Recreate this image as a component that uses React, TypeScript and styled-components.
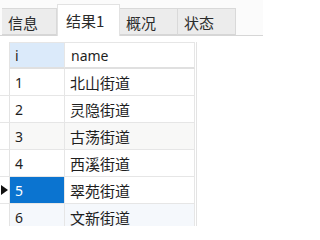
import React from 'react';
import styled, { createGlobalStyle } from 'styled-components';

const GlobalStyle = createGlobalStyle`
  html, body {
    margin: 0;
    padding: 0;
    background: #ffffff;
  }
  body {
    width: 263px;
    height: 226px;
    overflow: hidden;
    font-family: "Noto Sans", "Noto Sans CJK SC", sans-serif;
  }
`;

const Page = styled.div`
  display: flex;
  flex-direction: column;
  width: 263px;
  height: 226px;
  overflow: hidden;
  background: #fff;
`;

const TabBar = styled.div`
  flex-shrink: 0;
  display: flex;
  align-items: flex-end;
  height: 36px;
  box-sizing: border-box;
  padding-left: 2px;
  border-bottom: 1px solid #d6d6d6;
  background: #fbfbfb;
`;

const Tab = styled.div<{ $active?: boolean; $w: number }>`
  box-sizing: border-box;
  width: ${(p) => p.$w}px;
  height: ${(p) => (p.$active ? 32 : 27)}px;
  margin-bottom: ${(p) => (p.$active ? -1 : 0)}px;
  padding-left: ${(p) => (p.$active ? 8 : 6)}px;
  display: flex;
  align-items: center;
  background: ${(p) => (p.$active ? '#ffffff' : '#ececec')};
  border: 1px solid ${(p) => (p.$active ? '#e2e2e2' : '#d9d9d9')};
  border-bottom: ${(p) => (p.$active ? 'none' : '1px solid #d6d6d6')};
  border-left: ${(p) => (p.$active ? '1px solid #e2e2e2' : 'none')};
  font-family: "Noto Sans CJK SC", sans-serif;
  font-size: 15px;
  color: #2b2b2b;
  padding-top: ${(p) => (p.$active ? 0 : 1)}px;
`;

const Grid = styled.div`
  flex-shrink: 0;
  display: grid;
  grid-template-columns: 10px 55px 130px;
  grid-auto-rows: 27px;
  margin-top: 6px;
  width: 196px;
  border-right: 1px solid #e3e3e3;
`;

const Cell = styled.div<{ $bg?: string; $selected?: boolean; $cjk?: boolean }>`
  box-sizing: border-box;
  display: flex;
  align-items: center;
  padding-left: 5px;
  border-right: 1px solid #e6e6e6;
  border-bottom: 1px solid #e6e6e6;
  background: ${(p) => (p.$selected ? '#0b74d0' : p.$bg || '#ffffff')};
  color: ${(p) => (p.$selected ? '#ffffff' : '#1e1e1e')};
  font-family: ${(p) => (p.$cjk ? '"Noto Sans CJK SC", sans-serif' : '"Noto Sans", "Noto Sans CJK SC", sans-serif')};
  font-size: ${(p) => (p.$cjk ? 15 : 14)}px;
  white-space: nowrap;
  overflow: hidden;
`;

const HeaderCell = styled(Cell)`
  border-top: 1px solid #e6e6e6;
  border-bottom: 2px solid #e0e0e0;
`;

const Gutter = styled.div<{ $top?: boolean }>`
  box-sizing: border-box;
  display: flex;
  align-items: center;
  border-right: 1px solid #e3e3e3;
  border-bottom: ${(p) => (p.$top ? 'none' : '1px solid #e6e6e6')};
  background: #fff;
`;

const Arrow = styled.span`
  width: 0;
  height: 0;
  margin-left: 1px;
  border-top: 5px solid transparent;
  border-bottom: 5px solid transparent;
  border-left: 7px solid #111;
`;

const tabs = [
  { label: '信息', w: 55 },
  { label: '结果1', w: 63, active: true },
  { label: '概况', w: 58 },
  { label: '状态', w: 58 },
];

const rows = [
  { id: '1', name: '北山街道' },
  { id: '2', name: '灵隐街道' },
  { id: '3', name: '古荡街道', bg: '#f8f8f7' },
  { id: '4', name: '西溪街道' },
  { id: '5', name: '翠苑街道', selected: true },
  { id: '6', name: '文新街道', bg: '#f5f8fc' },
];

export default function App() {
  return (
    <Page>
      <GlobalStyle />
      <TabBar>
        {tabs.map((t) => (
          <Tab key={t.label} $w={t.w} $active={t.active}>
            {t.label}
          </Tab>
        ))}
      </TabBar>
      <Grid>
        <Gutter $top />
        <HeaderCell $bg="#dbeafa">i</HeaderCell>
        <HeaderCell style={{ paddingLeft: 6 }}>name</HeaderCell>
        {rows.map((r) => (
          <React.Fragment key={r.id}>
            <Gutter>{r.selected && <Arrow />}</Gutter>
            <Cell $bg={r.bg} $selected={r.selected}>
              {r.id}
            </Cell>
            <Cell $bg={r.bg} $cjk>
              {r.name}
            </Cell>
          </React.Fragment>
        ))}
      </Grid>
    </Page>
  );
}
